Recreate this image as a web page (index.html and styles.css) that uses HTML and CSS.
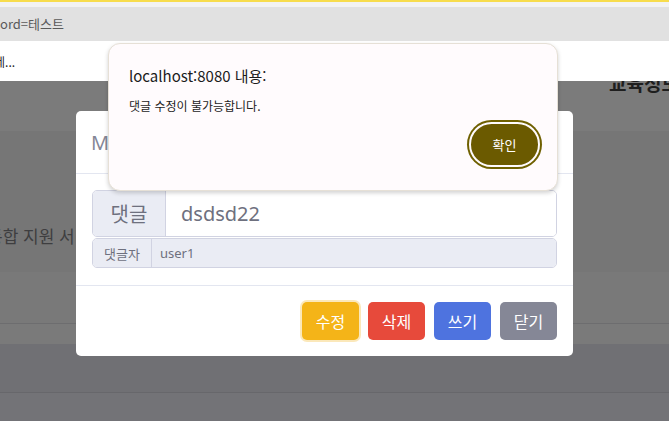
FILE: index.html
```html
<!DOCTYPE html>
<html lang="ko">
<head>
<meta charset="utf-8">
<title>댓글 수정</title>
<link rel="stylesheet" href="styles.css">
</head>
<body>
<div class="topline"></div>
<div class="tabgap"></div>
<div class="urlbar"><span class="url">ord=테스트</span></div>
<div class="suggest"><span class="sugtext">네...</span></div>
<div class="band band-a"><span class="brand">교육정보</span></div>
<div class="band band-b"><span class="bandtext">통합 지원 서비스</span></div>
<div class="band band-c"></div>
<div class="band band-d"></div>
<div class="band band-e"></div>
<div class="band band-f"></div>

<div class="modal">
  <div class="modal-header"><span class="modal-title">Modal</span></div>
  <div class="modal-body">
    <div class="igroup ig-lg">
      <span class="ig-label">댓글</span>
      <span class="ig-input">dsdsd22</span>
    </div>
    <div class="igroup ig-sm">
      <span class="ig-label">댓글자</span>
      <span class="ig-input disabled">user1</span>
    </div>
  </div>
  <div class="modal-footer">
    <button class="btn btn-warning">수정</button>
    <button class="btn btn-danger">삭제</button>
    <button class="btn btn-primary">쓰기</button>
    <button class="btn btn-secondary">닫기</button>
  </div>
</div>

<div class="alert">
  <div class="alert-title">localhost:8080 내용:</div>
  <div class="alert-msg">댓글 수정이 불가능합니다.</div>
  <div class="alert-actions"><button class="alert-ok">확인</button></div>
</div>
</body>
</html>
```
FILE: styles.css
```css
* { box-sizing: border-box; }
html, body { margin: 0; padding: 0; }
body {
  width: 669px;
  height: 421px;
  overflow: hidden;
  position: relative;
  font-family: "Noto Sans", "Noto Sans CJK KR", sans-serif;
  background: #727276;
}
.topline { height: 2px; background: #f7dc4c; }
.tabgap { height: 5px; background: #f2f2f2; }
.urlbar {
  height: 34px;
  background: #e1e1e1;
  display: flex;
  align-items: center;
}
.url {
  font-family: "Noto Sans CJK KR", sans-serif;
  font-size: 13px;
  color: #5a5a5a;
  margin-top: -1px;
}
.suggest {
  height: 40px;
  background: #ffffff;
  display: flex;
  align-items: center;
}
.sugtext {
  font-family: "Noto Sans CJK KR", sans-serif;
  font-size: 12px;
  color: #222;
  margin-left: -6px;
}
.band { overflow: hidden; }
.band-a {
  height: 50px;
  background: #7b7b7b;
  display: flex;
  justify-content: flex-end;
}
.brand {
  font-family: "Noto Sans CJK KR", sans-serif;
  font-weight: 700;
  font-size: 19px;
  color: #1e1e1e;
  margin-top: -12px;
  margin-right: -10px;
  white-space: nowrap;
}
.band-b {
  height: 141px;
  background: #767676;
  display: flex;
  align-items: flex-end;
  padding-bottom: 24px;
}
.bandtext {
  font-family: "Noto Sans CJK KR", sans-serif;
  font-size: 17px;
  color: #3e3e40;
  margin-left: -13px;
  white-space: nowrap;
}
.band-c { height: 52px; background: #797979; border-bottom: 1px solid #6d6d6f; }
.band-d { height: 20px; background: #7a7a7a; }
.band-e { height: 49px; background: #707074; border-bottom: 1px solid #67676b; }
.band-f { height: 30px; background: #737377; }

/* modal */
.modal {
  position: absolute;
  left: 76px;
  top: 111px;
  width: 497px;
  height: 245px;
  background: #fff;
  border-radius: 5px;
  display: flex;
  flex-direction: column;
}
.modal-header {
  height: 63px;
  border-bottom: 1px solid #e3e6f0;
  padding: 0 15px;
  display: flex;
  align-items: center;
}
.modal-title {
  font-size: 20px;
  color: #858796;
  font-weight: 400;
}
.modal-body {
  padding: 16px 16px 17px 16px;
  display: flex;
  flex-direction: column;
  gap: 1px;
  border-bottom: 1px solid #e3e6f0;
}
.igroup {
  display: flex;
  width: 465px;
  border: 1px solid #d1d3e2;
  border-radius: 5px;
  overflow: hidden;
  color: #6e707e;
}
.ig-label {
  background: #eaecf4;
  border-right: 1px solid #d1d3e2;
  display: flex;
  align-items: center;
  justify-content: center;
  font-family: "Noto Sans CJK KR", sans-serif;
}
.ig-input {
  flex: 1;
  display: flex;
  align-items: center;
  background: #fff;
}
.ig-input.disabled { background: #eaecf4; }
.ig-lg { height: 47px; }
.ig-lg .ig-label { width: 73px; font-size: 20px; }
.ig-lg .ig-input { padding-left: 15px; font-size: 20px; }
.ig-sm { height: 30px; }
.ig-sm .ig-label { width: 59px; font-size: 13px; }
.ig-sm .ig-input { padding-left: 8px; font-size: 13px; }

.modal-footer {
  flex: 1;
  display: flex;
  justify-content: flex-end;
  align-items: center;
  gap: 9px;
  padding: 0 16px;
}
.btn {
  width: 57px;
  height: 38px;
  border: none;
  border-radius: 5px;
  color: #fff;
  font-family: "Noto Sans CJK KR", sans-serif;
  font-size: 16px;
  padding: 0;
}
.btn-warning { background: #f4b418; box-shadow: 0 0 0 2px rgba(247, 203, 101, 0.45); }
.btn-danger { background: #e74a3b; }
.btn-primary { background: #4e73df; }
.btn-secondary { background: #858796; }

/* js alert */
.alert {
  position: absolute;
  left: 108px;
  top: 43px;
  width: 450px;
  height: 148px;
  background: #fffbfd;
  border: 1px solid #e6e0d6;
  border-radius: 12px;
  box-shadow: 0 2px 4px rgba(0, 0, 0, 0.18);
  padding: 22px 17px 0 20px;
  font-family: "Noto Sans CJK KR", sans-serif;
  color: #1c1c1c;
}
.alert-title { font-size: 15px; line-height: 20px; }
.alert-msg { font-size: 12px; line-height: 16px; margin-top: 12px; }
.alert-actions {
  display: flex;
  justify-content: flex-end;
  margin-top: 8px;
}
.alert-ok {
  width: 71px;
  height: 45px;
  border-radius: 23px;
  background: #6b5a00;
  border: 2px solid #fffbfd;
  box-shadow: 0 0 0 2px #6f6000;
  color: #fff;
  font-family: "Noto Sans CJK KR", sans-serif;
  font-size: 13px;
  padding: 0;
}
```
